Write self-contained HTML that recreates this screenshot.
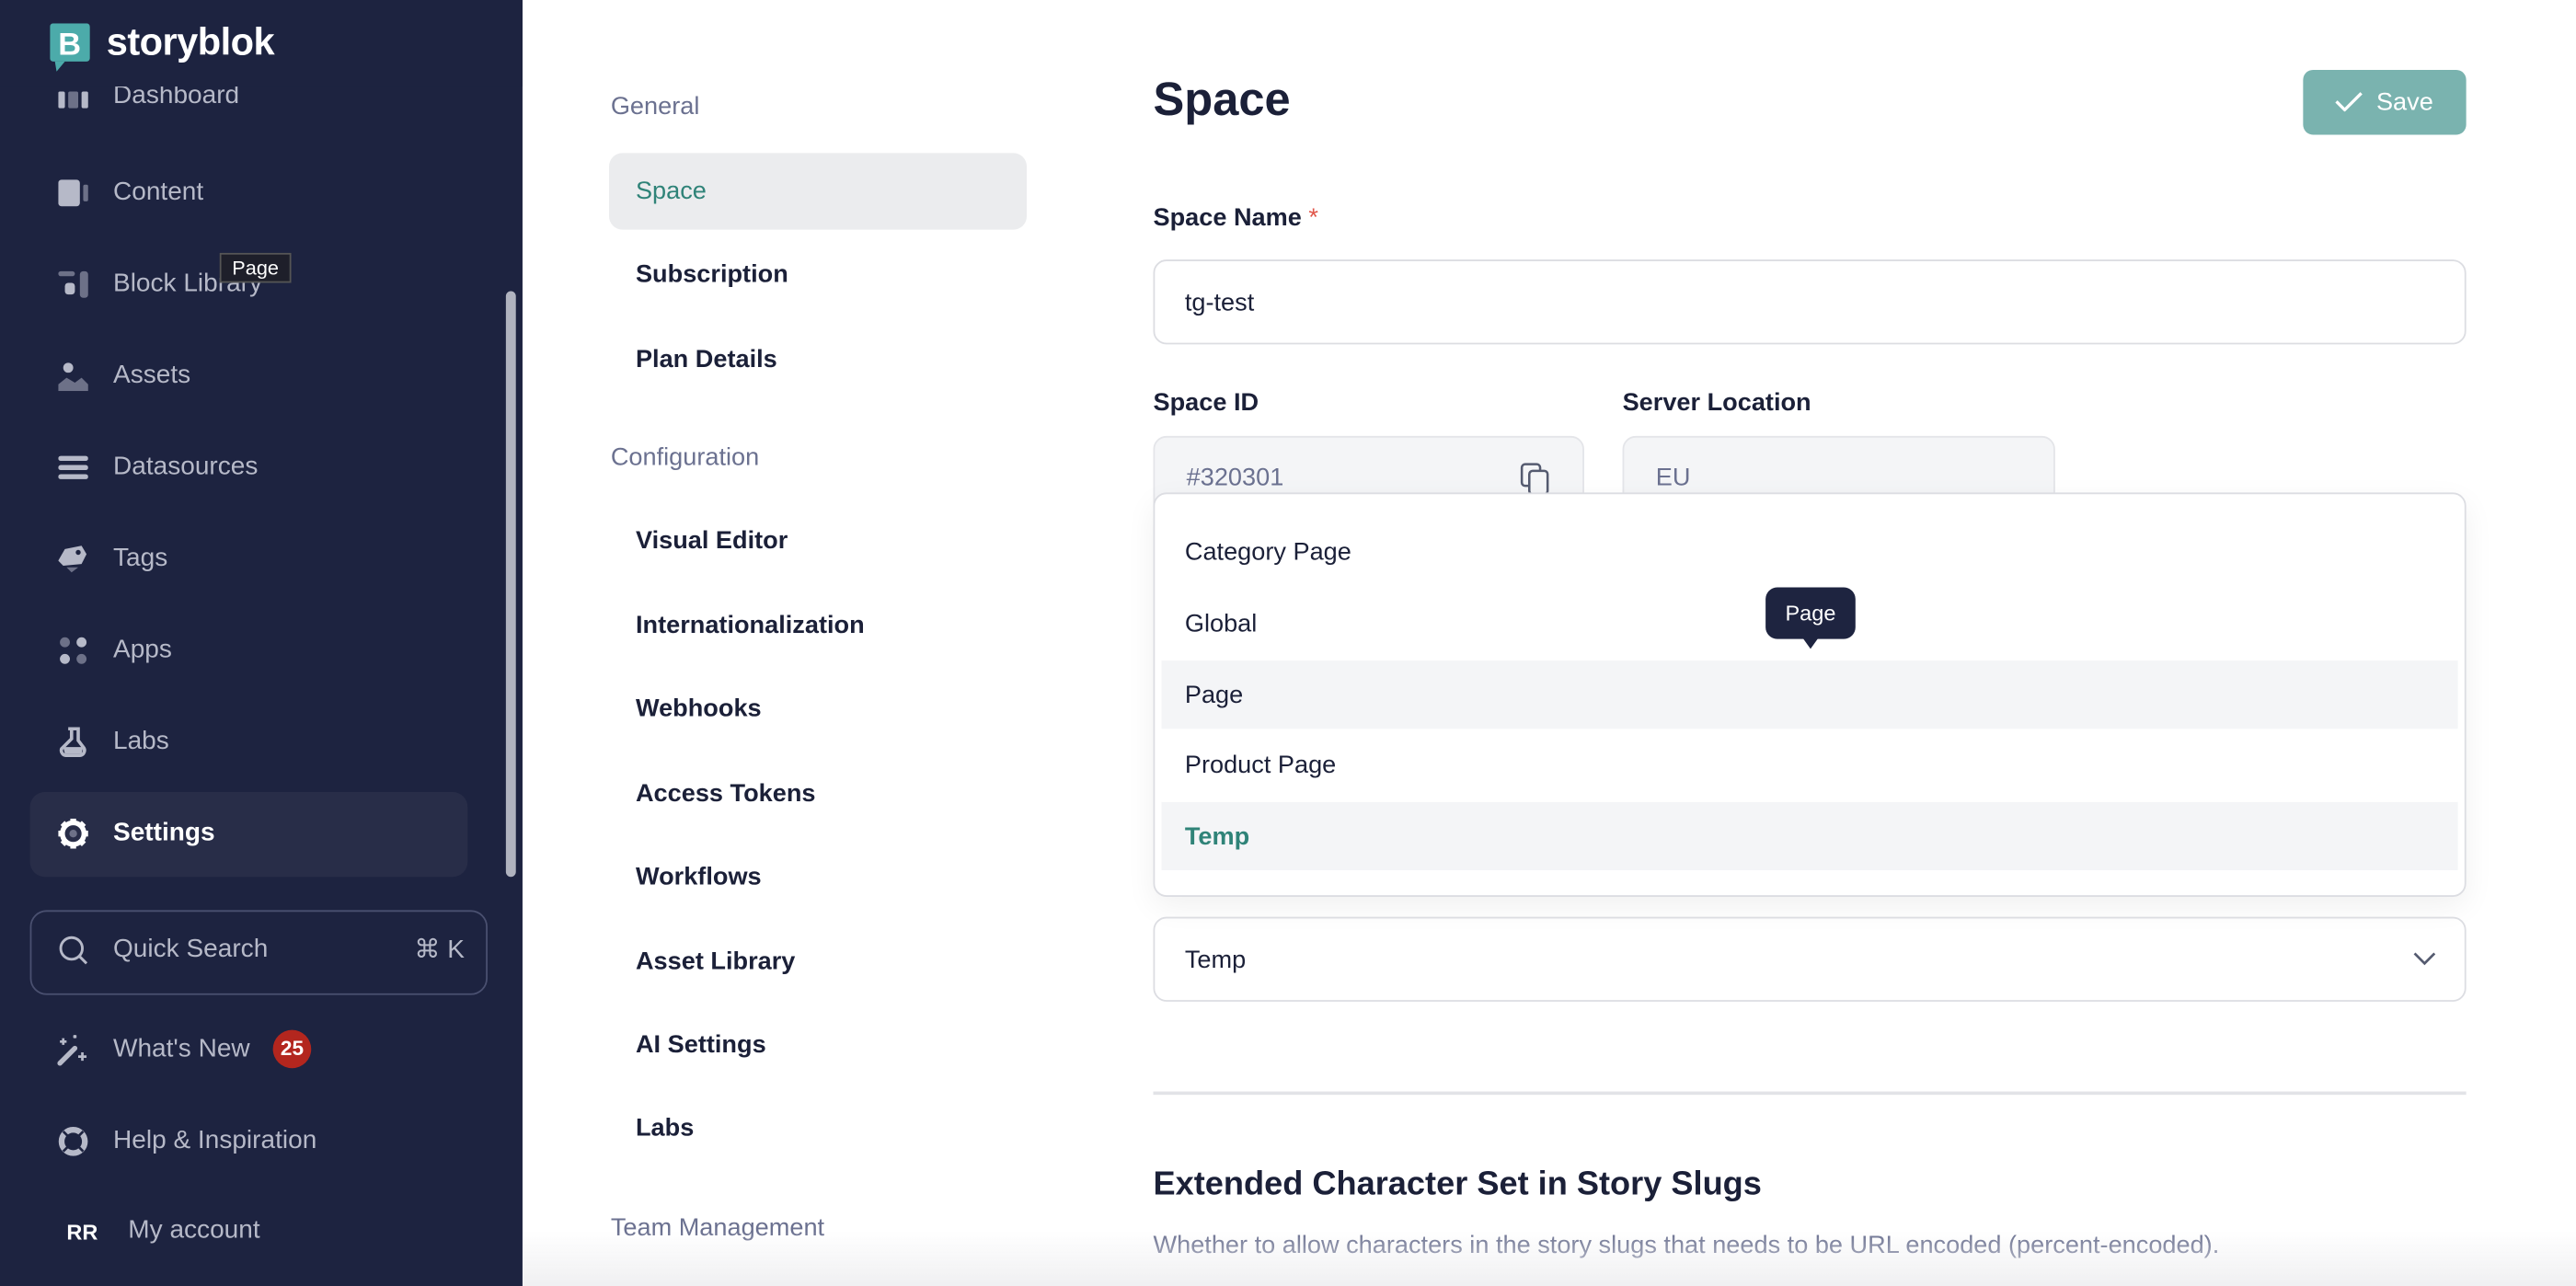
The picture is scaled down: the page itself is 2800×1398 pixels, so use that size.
<!DOCTYPE html>
<html><head><meta charset="utf-8"><style>
*{box-sizing:border-box;margin:0;padding:0}
html,body{width:2800px;height:1398px;overflow:hidden;background:#fff}
#w{width:1548px;height:773px;transform:scale(1.80879);transform-origin:0 0;position:relative;font-family:"Liberation Sans",sans-serif;overflow:hidden}
.a{position:absolute;white-space:nowrap}
#sb{position:absolute;left:0;top:0;width:314px;height:773px;background:#1d2340;overflow:hidden}
.ni{position:absolute;left:68px;font-size:15.5px;color:#b6b9c8;transform:translateY(-50%)}
.ic{position:absolute;left:35px;width:18px;height:18px;transform:translateY(-50%)}
.mn{position:absolute;left:382px;font-size:15px;color:#1b2038;font-weight:700;transform:translateY(-50%);-webkit-text-stroke:0}
.mh{position:absolute;left:367px;font-size:15px;color:#6b7190;transform:translateY(-50%)}
.lbl{position:absolute;font-size:15px;font-weight:700;color:#1b2038;transform:translateY(-50%)}
.opt{position:absolute;left:712px;font-size:15px;color:#1b2038;transform:translateY(-50%)}
</style></head><body><div id="w">
<div id="sb">
 <div class="ni" style="top:58px">Dashboard</div>
 <svg class="ic" style="top:60px" viewBox="0 0 18 18"><rect x="0" y="4" width="4" height="10" rx="1" fill="#b6b9c8"/><rect x="6" y="4" width="6" height="10" rx="1" fill="#6d7188"/><rect x="14" y="4" width="4" height="10" rx="1" fill="#b6b9c8"/></svg>
 <div style="position:absolute;left:0;top:0;width:314px;height:52px;background:#1d2340"></div>
 <svg class="a" style="left:30px;top:14px" width="26" height="30"><rect x="0" y="0" width="24" height="23" rx="2" fill="#4cabaa"/><path d="M3 23 L9 23 L4 29Z" fill="#4cabaa"/><text x="5" y="19" font-family="Liberation Sans" font-weight="700" font-size="19" fill="#fff">B</text></svg>
 <div class="a" style="left:64px;top:12px;font-size:23px;font-weight:700;color:#fff;letter-spacing:-0.3px">storyblok</div>
 <svg class="ic" style="top:116px" viewBox="0 0 18 18"><rect x="0" y="1" width="13" height="16" rx="2" fill="#b6b9c8"/><rect x="15" y="4" width="3" height="10" rx="1" fill="#6d7188"/></svg><div class="ni" style="top:116px">Content</div>
 <svg class="ic" style="top:171px" viewBox="0 0 18 18"><rect x="0" y="1" width="10" height="3" rx="1.5" fill="#6d7188"/><rect x="4" y="8" width="6" height="7" rx="2" fill="#b6b9c8"/><rect x="13" y="1" width="5" height="16" rx="2" fill="#6d7188"/></svg><div class="ni" style="top:171px">Block Library</div>
 <svg class="ic" style="top:226px" viewBox="0 0 18 18"><circle cx="6" cy="4" r="3" fill="#b6b9c8"/><path d="M0 18 V14 L5 10 L10 13 L14 10 L18 14 V18Z" fill="#6d7188"/></svg><div class="ni" style="top:226px">Assets</div>
 <svg class="ic" style="top:281px" viewBox="0 0 18 18"><rect x="0" y="2" width="18" height="3" rx="1.5" fill="#b6b9c8"/><rect x="0" y="7.5" width="18" height="3" rx="1.5" fill="#b6b9c8"/><rect x="0" y="13" width="18" height="3" rx="1.5" fill="#b6b9c8"/></svg><div class="ni" style="top:281px">Datasources</div>
 <svg class="ic" style="top:336px" viewBox="0 0 18 18"><path d="M4 3 L14 1 L17 6 L14 12 L3 13 L0 10Z" fill="#b6b9c8"/><circle cx="12" cy="5" r="1.5" fill="#1d2340"/><path d="M5 14 L12 14 L8 17Z" fill="#6d7188"/></svg><div class="ni" style="top:336px">Tags</div>
 <svg class="ic" style="top:391px" viewBox="0 0 18 18"><circle cx="4" cy="4" r="3" fill="#6d7188"/><circle cx="14" cy="4" r="3" fill="#b6b9c8"/><circle cx="4" cy="14" r="3" fill="#b6b9c8"/><circle cx="14" cy="14" r="3" fill="#6d7188"/></svg><div class="ni" style="top:391px">Apps</div>
 <svg class="ic" style="top:446px" viewBox="0 0 18 18"><path d="M6 1 H13 M8 1 V7 L2 13 A3 3 0 0 0 5 17 H13 A3 3 0 0 0 15 12 L12 8 V1" stroke="#b6b9c8" stroke-width="2" fill="none"/><path d="M3 12 H15 L14 16 H4Z" fill="#b6b9c8"/></svg><div class="ni" style="top:446px">Labs</div>
 <div class="a" style="left:18px;top:476px;width:263px;height:51px;background:#282d48;border-radius:9px"></div>
 <svg class="ic" style="top:501px" viewBox="0 0 18 18"><circle cx="9" cy="9" r="6.5" fill="none" stroke="#fff" stroke-width="3"/><g stroke="#fff" stroke-width="3.5"><path d="M9 0V3M9 15V18M0 9H3M15 9H18M2.6 2.6L4.8 4.8M13.2 13.2L15.4 15.4M2.6 15.4L4.8 13.2M13.2 4.8L15.4 2.6"/></g><circle cx="9" cy="9" r="2.3" fill="#6d7188"/></svg><div class="ni" style="top:501px;color:#fff;font-weight:700">Settings</div>
 <div class="a" style="left:304px;top:175px;width:6px;height:352px;background:#b0b3bf;border-radius:3px"></div>
 <div class="a" style="left:18px;top:547px;width:275px;height:51px;border:1px solid #4a5070;border-radius:10px"></div>
 <svg class="ic" style="top:571px" viewBox="0 0 18 18"><circle cx="8" cy="8" r="6.5" fill="none" stroke="#b6b9c8" stroke-width="1.6"/><path d="M13 13L17 17" stroke="#b6b9c8" stroke-width="1.6"/></svg><div class="ni" style="top:571px">Quick Search</div>
 <div class="ni" style="top:571px;left:249px">⌘ K</div>
 <svg class="ic" style="top:631px;left:32px;width:22px;height:22px" viewBox="0 0 22 22"><path d="M4 19 L13 10" stroke="#b6b9c8" stroke-width="3" stroke-linecap="round"/><path d="M4 6H8M6 4V8M15 15H20M17.5 12.5V17.5M12 3H14M13 2V4" stroke="#b6b9c8" stroke-width="1.5"/></svg><div class="ni" style="top:631px">What's New</div>
 <div class="a" style="left:164px;top:619px;width:23px;height:23px;border-radius:12px;background:#b3261e;color:#fff;font-size:12.5px;font-weight:700;text-align:center;line-height:23px">25</div>
 <svg class="ic" style="top:686px" viewBox="0 0 18 18"><circle cx="9" cy="9" r="7" fill="none" stroke="#b6b9c8" stroke-width="3.5"/><g stroke="#1d2340" stroke-width="1.5"><path d="M3 3L6.5 6.5M15 3L11.5 6.5M3 15L6.5 11.5M15 15L11.5 11.5"/></g></svg><div class="ni" style="top:686px">Help &amp; Inspiration</div>
 <div class="a" style="left:40px;top:733px;font-size:13px;font-weight:700;color:#fff">RR</div>
 <div class="ni" style="top:740px;left:77px">My account</div>
 <div class="a" style="left:132px;top:152px;width:43px;height:18px;background:#1e1f2a;border:1px solid #555;color:#fff;font-size:12px;line-height:16px;text-align:center">Page</div>
</div>

<div class="mh" style="top:64px">General</div>
<div class="a" style="left:366px;top:92px;width:251px;height:46px;background:#ebecee;border-radius:8px"></div>
<div class="mn" style="top:115px;color:#2f8378;font-weight:400">Space</div>
<div class="mn" style="top:165px">Subscription</div>
<div class="mn" style="top:216px">Plan Details</div>
<div class="mh" style="top:275px">Configuration</div>
<div class="mn" style="top:325px">Visual Editor</div>
<div class="mn" style="top:376px">Internationalization</div>
<div class="mn" style="top:426px">Webhooks</div>
<div class="mn" style="top:477px">Access Tokens</div>
<div class="mn" style="top:527px">Workflows</div>
<div class="mn" style="top:578px">Asset Library</div>
<div class="mn" style="top:628px">AI Settings</div>
<div class="mn" style="top:678px">Labs</div>
<div class="mh" style="top:738px">Team Management</div>

<div class="a" style="left:693px;top:44px;font-size:28px;font-weight:700;color:#1b2038">Space</div>
<div class="a" style="left:1384px;top:42px;width:98px;height:39px;background:#7ab3af;border-radius:6px;color:#fff;font-size:15px;line-height:39px;padding-left:19px"><svg width="17" height="12" style="vertical-align:-1px;margin-right:8px"><path d="M1 6L6 11L16 1" stroke="#fff" stroke-width="1.8" fill="none"/></svg>Save</div>
<div class="lbl" style="left:693px;top:131px">Space Name <span style="color:#e0564a;font-weight:400">*</span></div>
<div class="a" style="left:693px;top:156px;width:789px;height:51px;border:1px solid #dcdde2;border-radius:8px"></div>
<div class="opt" style="left:712px;top:182px">tg-test</div>
<div class="lbl" style="left:693px;top:242px">Space ID</div>
<div class="lbl" style="left:975px;top:242px">Server Location</div>
<div class="a" style="left:693px;top:262px;width:259px;height:51px;border:1px solid #e4e5e9;border-radius:8px;background:#f4f5f7"></div>
<div class="a" style="left:975px;top:262px;width:260px;height:51px;border:1px solid #e4e5e9;border-radius:8px;background:#f4f5f7"></div>
<div class="opt" style="left:713px;top:287px;color:#6b7190">#320301</div>
<div class="opt" style="left:995px;top:287px;color:#6b7190">EU</div>
<svg class="a" style="left:913px;top:278px" width="20" height="20"><rect x="1.5" y="1" width="11" height="13" rx="2" fill="none" stroke="#555b70" stroke-width="1.4"/><rect x="6" y="5" width="11" height="14" rx="2" fill="#f4f5f7" stroke="#555b70" stroke-width="1.4"/></svg>

<div class="a" style="left:693px;top:296px;width:789px;height:243px;background:#fff;border:1px solid #dcdde2;border-radius:8px;box-shadow:0 6px 18px rgba(0,0,0,0.06)"></div>
<div class="a" style="left:698px;top:397px;width:779px;height:41px;background:#f4f5f7"></div>
<div class="a" style="left:698px;top:482px;width:779px;height:41px;background:#f4f5f7"></div>
<div class="opt" style="top:332px">Category Page</div>
<div class="opt" style="top:375px">Global</div>
<div class="opt" style="top:418px">Page</div>
<div class="opt" style="top:460px">Product Page</div>
<div class="opt" style="top:503px;color:#2f8378;font-weight:700">Temp</div>
<div class="a" style="left:1061px;top:353px;width:54px;height:31px;background:#1e2440;border-radius:7px;color:#fff;font-size:13px;line-height:31px;text-align:center">Page</div>
<div class="a" style="left:1083px;top:383px;width:0;height:0;border-left:5px solid transparent;border-right:5px solid transparent;border-top:7px solid #1e2440"></div>

<div class="a" style="left:693px;top:551px;width:789px;height:51px;border:1px solid #dcdde2;border-radius:8px"></div>
<div class="opt" style="top:577px">Temp</div>
<svg class="a" style="left:1450px;top:571px" width="14" height="10"><path d="M1 2L7 8L13 2" stroke="#555b70" stroke-width="1.5" fill="none"/></svg>
<div class="a" style="left:693px;top:656px;width:789px;height:2px;background:#e2e3e7"></div>
<div class="a" style="left:693px;top:701px;font-size:20px;font-weight:700;color:#1b2038">Extended Character Set in Story Slugs</div>
<div class="a" style="left:693px;top:740px;font-size:15px;color:#6b7190">Whether to allow characters in the story slugs that needs to be URL encoded (percent-encoded).</div>
<div class="a" style="left:314px;top:740px;width:1234px;height:33px;background:linear-gradient(rgba(240,240,242,0),rgba(238,238,240,0.9))"></div>
</div></body></html>
